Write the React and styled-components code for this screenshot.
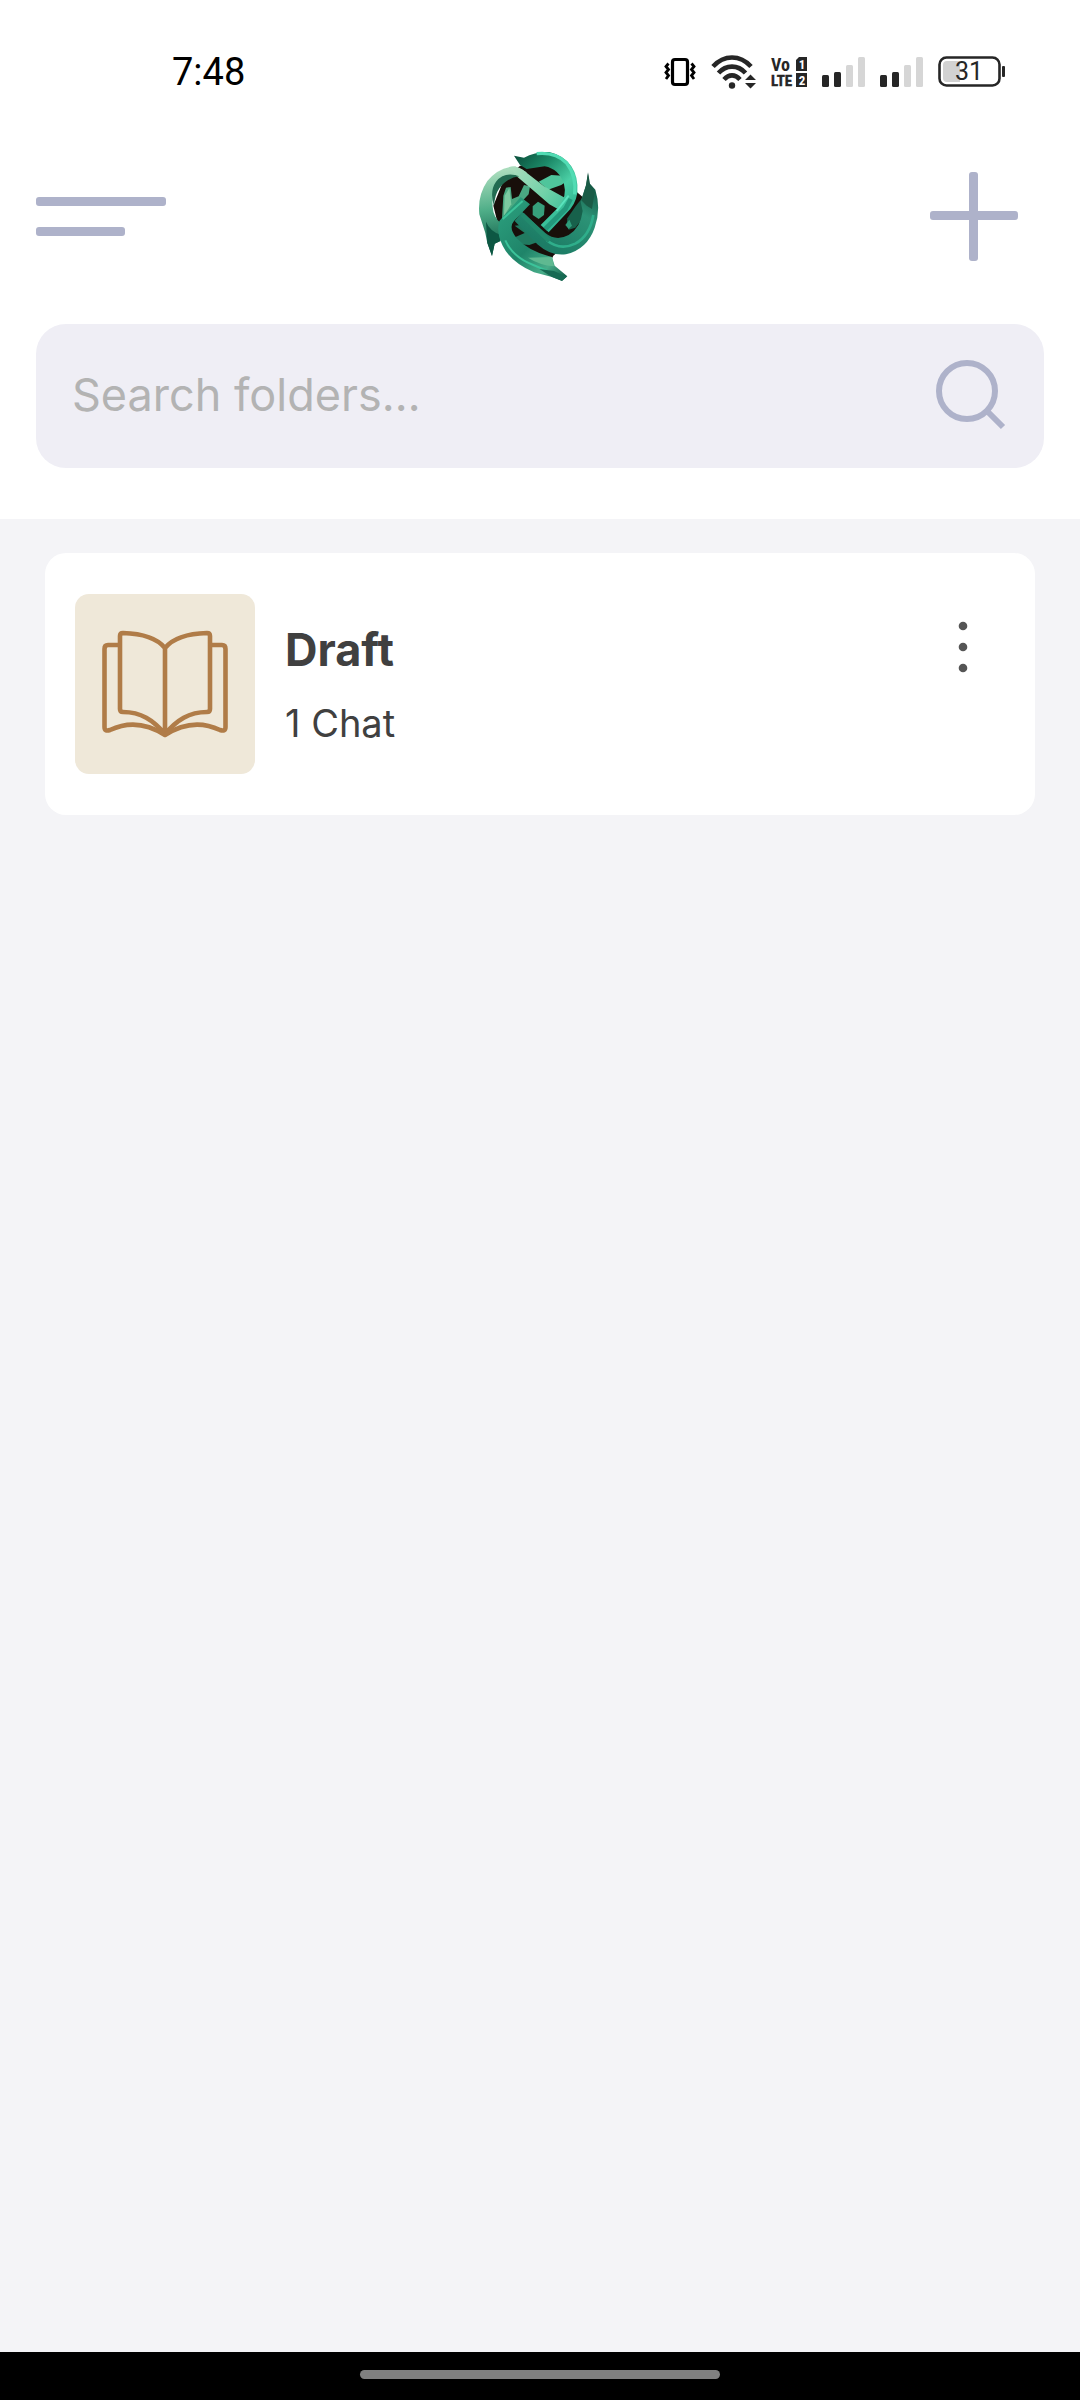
import React from 'react'
import styled, { createGlobalStyle } from 'styled-components'

const GlobalStyle = createGlobalStyle`
  * {
    box-sizing: border-box;
  }
  body {
    margin: 0;
    background-color: #f4f4f7;
    font-family: Inter, "Open Sans", sans-serif;
  }
`

const Page = styled.div`
  display: flex;
  flex-direction: column;
  min-height: 100vh;
`

const StatusBar = styled.div`
  display: flex;
  align-items: center;
  justify-content: space-between;
  height: 144px;
  padding: 0 75px 0 172px;
  background-color: white;
`

const Time = styled.time`
  font-family: Roboto, sans-serif;
  font-size: 38px;
  line-height: 48px;
  color: black;
`

const StatusIcons = styled.div`
  display: flex;
  align-items: center;
  gap: 15px;
`

const Header = styled.header`
  display: flex;
  flex-direction: column;
  gap: 36px;
  padding: 0 36px 51px;
  background-color: white;
`

const Toolbar = styled.div`
  display: grid;
  grid-template-columns: 1fr auto 1fr;
  align-items: center;
  height: 144px;
`

const IconButton = styled.button`
  display: flex;
  align-items: center;
  justify-content: center;
  justify-self: ${(props) => props.$side || 'auto'};
  padding: ${(props) => props.$pad || '0'};
  border: none;
  background: none;
  cursor: pointer;
`

const SearchBox = styled.form`
  display: flex;
  align-items: center;
  height: 144px;
  padding: 0 38px 0 36px;
  border-radius: 30px;
  background-color: #efeef5;
`

const SearchInput = styled.input`
  flex: 1;
  min-width: 0;
  height: 100%;
  padding: 0 0 4px;
  border: none;
  outline: none;
  background: none;
  font-family: inherit;
  font-size: 45px;
  color: #404040;

  &::placeholder {
    color: #b3b3b3;
    opacity: 1;
  }
`

const FolderList = styled.ul`
  flex: 1;
  display: flex;
  flex-direction: column;
  gap: 30px;
  margin: 0;
  padding: 34px 45px;
  list-style: none;
`

const FolderCard = styled.li`
  display: flex;
  align-items: center;
  gap: 30px;
  padding: 41px 48px 41px 30px;
  border-radius: 21px;
  background-color: white;
`

const Cover = styled.div`
  display: flex;
  width: 180px;
  height: 180px;
  border-radius: 14px;
  background-color: #efe8d9;
`

const FolderText = styled.div`
  flex: 1;
  display: flex;
  flex-direction: column;
  gap: 14px;
  color: #404040;
`

const FolderName = styled.h2`
  margin: 0;
  font-size: 45px;
  font-weight: 700;
  line-height: 64px;
`

const FolderCount = styled.p`
  margin: 0;
  font-size: 38px;
  line-height: 54px;
`

const MoreButton = styled(IconButton)`
  align-self: flex-start;
  width: 48px;
  margin-top: 21px;
`

const NavBar = styled.footer`
  display: flex;
  align-items: center;
  justify-content: center;
  height: 48px;
  padding-bottom: 3px;
  background-color: black;
`

const NavHandle = styled.div`
  width: 33.33%;
  height: 9px;
  border-radius: 5px;
  background-color: #808080;
`

const VibrateIcon = () => (
  <svg width="32" height="30" viewBox="0 0 32 30" fill="none" stroke="black">
    <rect x="8.5" y="2.500" width="15" height="25" rx="2.500" strokeWidth="3.200" />
    <path d="M4.500 6.500L2 9.500L4.500 12.500L2 15.500L4.500 18.500L2 22" strokeWidth="2.800" />
    <path d="M27.500 6.500L30 9.500L27.500 12.500L30 15.500L27.500 18.500L30 22" strokeWidth="2.800" />
  </svg>
)

const WifiIcon = () => (
  <svg width="45" height="34" viewBox="0 0 45 34" fill="none" stroke="#262626" strokeWidth="4.600">
    <path d="M2 11.500C13 -0.500 29 -0.500 40 11.500" />
    <path d="M7.500 18C15 9.500 27 9.500 34.500 18" />
    <path d="M13 24.500C18 19 24 19 29 24.500" />
    <circle cx="21" cy="30.500" r="3.200" fill="#262626" stroke="none" />
    <path d="M39.500 19.500L45 25H34ZM39.500 33.500L45 28H34Z" fill="#262626" stroke="none" />
  </svg>
)

const VolteIcon = () => (
  <svg
    width="36"
    height="30"
    viewBox="0 0 36 30"
    overflow="visible"
    fill="#262626"
    fontFamily="'Liberation Sans Narrow', 'Roboto Condensed', Roboto, sans-serif"
    fontWeight="700"
  >
    <text x="0" y="14" fontSize="18">Vo</text>
    <text x="0" y="29" fontSize="15" stroke="#262626" strokeWidth="0.400">LTE</text>
    <path d="M28 0H36V14H25V3ZM25 16H36V30H25Z" />
    <text x="31" y="12" fontSize="13" fill="white" textAnchor="middle">1</text>
    <text x="31" y="28" fontSize="13" fill="white" textAnchor="middle">2</text>
  </svg>
)

const SignalIcon = () => (
  <svg width="43" height="30" viewBox="0 0 43 30">
    <rect x="0" y="18" width="7" height="12" rx="1.500" fill="#262626" />
    <rect x="12" y="15" width="7" height="15" rx="1.500" fill="#262626" />
    <rect x="24" y="8" width="7" height="22" rx="1.500" fill="#d6d6d6" />
    <rect x="36" y="0" width="7" height="30" rx="1.500" fill="#d6d6d6" />
  </svg>
)

const BatteryIcon = ({ level }) => (
  <svg width="67" height="32" viewBox="0 0 67 32">
    <rect x="1.500" y="1.500" width="60" height="28" rx="7" fill="none" stroke="#262626" strokeWidth="2.600" />
    <path d="M9 5H22V26H9Q5 26 5 22V9Q5 5 9 5Z" fill="#d2d2d2" />
    <rect x="64" y="10" width="3" height="11" rx="1" fill="#262626" />
    <text x="31" y="24" fontFamily="Roboto, sans-serif" fontSize="25" fill="#262626" textAnchor="middle">
      {level}
    </text>
  </svg>
)

const MenuIcon = () => (
  <svg width="131" height="39" viewBox="0 0 131 39" fill="#aeb2ca">
    <rect x="0" y="0" width="130" height="9" rx="3" />
    <rect x="0" y="30" width="89" height="9" rx="3" />
  </svg>
)

const PlusIcon = () => (
  <svg width="89" height="89" viewBox="0 0 89 89" fill="#aeb2ca">
    <rect x="0" y="39" width="88" height="9" rx="3" />
    <rect x="39" y="0" width="9" height="89" rx="3" />
  </svg>
)

const SearchIcon = () => (
  <svg width="70" height="72" viewBox="0 0 70 72" fill="none" stroke="#aeb2ca" strokeWidth="6">
    <circle cx="31" cy="31" r="28" />
    <path d="M50 50L67 67" />
  </svg>
)

const MoreIcon = () => (
  <svg width="10" height="60" viewBox="0 0 10 60" fill="#555555">
    <circle cx="5" cy="11" r="4.300" />
    <circle cx="5" cy="32" r="4.300" />
    <circle cx="5" cy="53" r="4.300" />
  </svg>
)

const BookIcon = () => (
  <svg
    width="180"
    height="180"
    viewBox="0 0 180 180"
    fill="none"
    stroke="#b07c48"
    strokeWidth="4.600"
    strokeLinejoin="round"
  >
    <path d="M90 54C81 43 66 39.500 48 39Q45 39 45 42V115Q45 118 48 118C66 118 78 126 90 140C102 126 114 118 132 118Q135 118 135 115V42Q135 39 132 39C114 39.500 99 43 90 54V141" />
    <path d="M45 51H33Q29.500 51 29.500 55V133Q29.500 138 35 136C54 127 73 130 90 141C107 130 126 127 145 136Q150.500 138 150.500 133V55Q150.500 51 147 51H135" />
  </svg>
)

const Logo = () => (
  <svg width="124" height="134" viewBox="24 10 372 402" role="img" aria-label="Logo">
    <defs>
      <linearGradient id="top" x1="133" y1="30" x2="300" y2="200" gradientUnits="userSpaceOnUse">
        <stop offset="0" stopColor="#0a4f3b" />
        <stop offset="0.350" stopColor="#1c8a68" />
        <stop offset="0.700" stopColor="#4bd0a6" />
        <stop offset="1" stopColor="#2fb592" />
      </linearGradient>
      <linearGradient id="left" x1="60" y1="80" x2="90" y2="300" gradientUnits="userSpaceOnUse">
        <stop offset="0" stopColor="#a9dcbc" />
        <stop offset="0.500" stopColor="#4fae88" />
        <stop offset="1" stopColor="#14634d" />
      </linearGradient>
      <linearGradient id="cross" x1="130" y1="70" x2="290" y2="190" gradientUnits="userSpaceOnUse">
        <stop offset="0" stopColor="#a9dcbc" />
        <stop offset="0.600" stopColor="#6fd2a8" />
        <stop offset="1" stopColor="#43c09a" />
      </linearGradient>
      <linearGradient id="right" x1="370" y1="100" x2="250" y2="310" gradientUnits="userSpaceOnUse">
        <stop offset="0" stopColor="#0f4c3a" />
        <stop offset="0.450" stopColor="#2c9376" />
        <stop offset="1" stopColor="#1d7d66" />
      </linearGradient>
      <linearGradient id="bottom" x1="90" y1="200" x2="280" y2="395" gradientUnits="userSpaceOnUse">
        <stop offset="0" stopColor="#2a9c7b" />
        <stop offset="0.500" stopColor="#1f8469" />
        <stop offset="0.800" stopColor="#48ad89" />
        <stop offset="1" stopColor="#15624d" />
      </linearGradient>
    </defs>
    <path d="M150 60L260 55L310 130L345 160L335 260L280 305L250 330L240 350L150 310L85 240L70 180L100 105Z" fill="#180f0a" />

    {/* inner wisps */}
    <path d="M100 150L108 126L122 124L126 160L146 152L162 118L180 122L176 146L140 184L96 220Z" fill="#4aa881" />
    <path d="M104 150L118 128L124 176L102 210Z" fill="#7cc9a0" />
    <path d="M206 108L244 88L278 90L290 106L274 118L234 132Z" fill="#4fc59b" />
    <path d="M292 218L318 180L342 150L344 210L316 246L296 252L290 236Z" fill="#17614b" />
    <path d="M298 222L306 240L296 250L286 238Z" fill="#2e9c79" />
    <path d="M134 240L172 236L212 286L178 298L150 296L128 278L164 262Z" fill="#217a60" />
    <path d="M204 168L224 180L222 208L206 220L188 208V182Z" fill="#379f7b" />

    {/* left blade and the band that crosses to the right */}
    <path d="M28 206Q22 150 52 106Q86 64 136 62L170 80L158 98Q120 76 88 104Q64 130 68 184Q70 216 94 234L92 286L74 294L66 332L52 292L46 262Z" fill="url(#left)" />
    <path d="M120 64Q146 60 166 78L222 122L298 164L288 186L270 194L238 176L178 124L140 92Z" fill="url(#cross)" />
    <path d="M48 228Q60 258 94 268L90 286L74 294L66 330L52 292Z" fill="#0d5743" />
    <path d="M78 108Q104 76 148 92Q112 96 88 128Q74 148 72 182Q58 136 78 108Z" fill="#226b51" />

    {/* top blade */}
    <path d="M132 30L162 36Q194 18 238 19Q284 30 304 62Q326 94 322 142Q316 178 290 202L236 260L212 238L266 184Q292 152 282 116Q268 70 224 62L170 70L150 58Z" fill="url(#top)" />
    <path d="M200 24Q256 18 290 52Q320 92 314 146" fill="none" stroke="#52dcb4" strokeWidth="10" />
    <path d="M302 160L286 190L226 250" fill="none" stroke="#23987b" strokeWidth="14" />
    <path d="M296 150L260 196" fill="none" stroke="#5be3bd" strokeWidth="6" />

    {/* right blade */}
    <path d="M354 80L360 114L376 132Q394 190 374 246Q352 310 288 326Q242 332 202 296L134 226L156 198L226 262Q258 288 296 268Q332 246 338 196L332 168L348 118Z" fill="url(#right)" />
    <path d="M354 84L358 118L374 140L366 190L350 180L334 164L348 120Z" fill="#1a5b46" />
    <path d="M230 284Q270 316 316 294Q360 270 370 208" fill="none" stroke="#2fae8b" strokeWidth="8" />
    <path d="M156 206L238 286" fill="none" stroke="#228a6d" strokeWidth="14" />

    {/* bottom blade */}
    <path d="M88 226L152 154L180 176L132 226Q114 246 140 278Q178 318 246 334L254 360L292 392L276 406L246 394L192 380Q122 350 98 300Q78 262 88 226Z" fill="url(#bottom)" />
    <path d="M174 336L246 334L252 362Q208 358 174 336Z" fill="#5fb991" />
    <path d="M98 220L158 166M106 284Q128 334 190 358L256 386" fill="none" stroke="#3cc39a" strokeWidth="6" />
    <path d="M208 370L252 376L290 393L276 405L246 394Z" fill="#176a53" />
  </svg>
)

const folders = [{ name: 'Draft', count: '1 Chat' }]

function App() {
  return (
    <Page>
      <GlobalStyle />
      <StatusBar>
        <Time>7:48</Time>
        <StatusIcons>
          <VibrateIcon />
          <WifiIcon />
          <VolteIcon />
          <SignalIcon />
          <SignalIcon />
          <BatteryIcon level={31} />
        </StatusIcons>
      </StatusBar>

      <Header>
        <Toolbar>
          <IconButton $side="start" aria-label="Menu">
            <MenuIcon />
          </IconButton>
          <Logo />
          <IconButton $side="end" $pad="0 25px 0 0" aria-label="New folder">
            <PlusIcon />
          </IconButton>
        </Toolbar>
        <SearchBox onSubmit={(e) => e.preventDefault()}>
          <SearchInput type="text" placeholder="Search folders…" aria-label="Search folders" />
          <IconButton type="submit" aria-label="Search">
            <SearchIcon />
          </IconButton>
        </SearchBox>
      </Header>

      <FolderList>
        {folders.map((folder) => (
          <FolderCard key={folder.name}>
            <Cover>
              <BookIcon />
            </Cover>
            <FolderText>
              <FolderName>{folder.name}</FolderName>
              <FolderCount>{folder.count}</FolderCount>
            </FolderText>
            <MoreButton aria-label="Folder options">
              <MoreIcon />
            </MoreButton>
          </FolderCard>
        ))}
      </FolderList>

      <NavBar>
        <NavHandle />
      </NavBar>
    </Page>
  )
}

export default App
